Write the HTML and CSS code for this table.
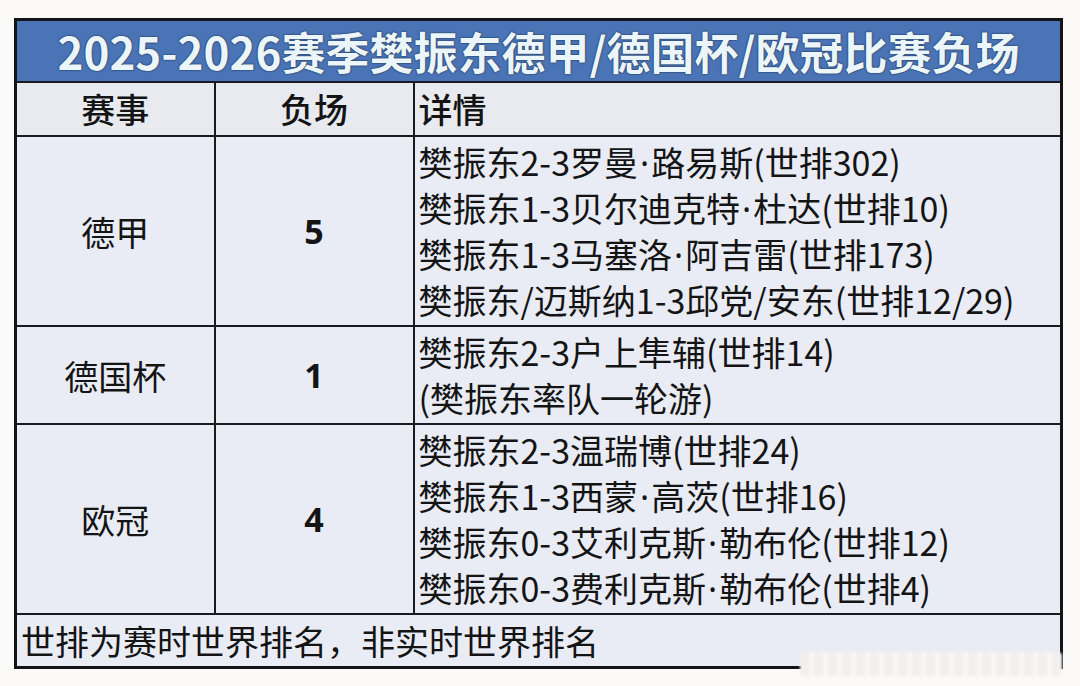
FILE: index.html
```html
<!DOCTYPE html>
<html lang="zh-CN">
<head>
<meta charset="utf-8">
<title>樊振东负场</title>
<link rel="stylesheet" href="styles.css">
</head>
<body>
<div class="page">
  <table class="sheet">
    <colgroup>
      <col class="c1"><col class="c2"><col class="c3">
    </colgroup>
    <tr class="title-row">
      <th colspan="3" class="title">2025-2026赛季樊振东德甲/德国杯/欧冠比赛负场</th>
    </tr>
    <tr class="head-row">
      <th class="center">赛事</th>
      <th class="center">负场</th>
      <th class="left">详情</th>
    </tr>
    <tr>
      <td class="center">德甲</td>
      <td class="center num">5</td>
      <td class="detail">
        <div>樊振东2-3罗曼<span class="dot">·</span>路易斯(世排302)</div>
        <div>樊振东1-3贝尔迪克特<span class="dot">·</span>杜达(世排10)</div>
        <div>樊振东1-3马塞洛<span class="dot">·</span>阿吉雷(世排173)</div>
        <div>樊振东/迈斯纳1-3邱党/安东(世排12/29)</div>
      </td>
    </tr>
    <tr>
      <td class="center">德国杯</td>
      <td class="center num">1</td>
      <td class="detail">
        <div>樊振东2-3户上隼辅(世排14)</div>
        <div>(樊振东率队一轮游)</div>
      </td>
    </tr>
    <tr>
      <td class="center">欧冠</td>
      <td class="center num">4</td>
      <td class="detail">
        <div>樊振东2-3温瑞博(世排24)</div>
        <div>樊振东1-3西蒙<span class="dot">·</span>高茨(世排16)</div>
        <div>樊振东0-3艾利克斯<span class="dot">·</span>勒布伦(世排12)</div>
        <div>樊振东0-3费利克斯<span class="dot">·</span>勒布伦(世排4)</div>
      </td>
    </tr>
    <tr class="foot-row">
      <td colspan="3" class="foot">世排为赛时世界排名，非实时世界排名</td>
    </tr>
  </table>
  <div class="watermark"></div>
</div>
</body>
</html>
```

FILE: styles.css
```css
html, body {
  margin: 0;
  padding: 0;
  background: #fcfaf8;
}

.page {
  position: relative;
  padding: 18px 0 0 14px;
  width: 1080px;
  height: 686px;
  box-sizing: border-box;
}

.sheet {
  border-collapse: collapse;
  width: 1049px;
  table-layout: fixed;
  border: 3px solid #121418;
  font-family: "Noto Sans CJK SC", "Noto Sans", sans-serif;
  color: #141414;
  font-size: 34px;
}

.c1 { width: 199px; }
.c2 { width: 199px; }
.c3 { width: auto; }

.sheet th,
.sheet td {
  border: 2px solid #1a1b1f;
  background: #e9ecf4;
  padding: 0;
}

.title {
  height: 60px;
  background: #4a74b6 !important;
  color: #eaf6fb;
  font-size: 44px;
  font-weight: 700;
  line-height: 60px;
  text-align: center;
  letter-spacing: 0;
  text-shadow: 0 0 1px #1d2c4a, 0 0 2px #1d2c4a;
}

.head-row th {
  height: 52px;
  font-weight: 500;
  line-height: 52px;
  background: #e8eaf0;
}

.center { text-align: center; }
.left { text-align: left; padding-left: 4px !important; }

.num {
  font-family: "Noto Sans", "Liberation Sans", sans-serif;
  font-weight: 700;
  font-size: 34px;
}

.detail {
  padding: 2px 4px !important;
  line-height: 46px;
  white-space: nowrap;
}

.dot {
  font-family: "Noto Sans", "Liberation Sans", sans-serif;
  line-height: 1;
  margin: 0 2px;
}

.foot {
  height: 51px;
  line-height: 51px;
  padding-left: 4px !important;
}

.watermark {
  position: absolute;
  left: 800px;
  top: 652px;
  width: 262px;
  height: 24px;
  background: repeating-linear-gradient(90deg, #f1f0ef 0 9px, #f8f7f6 9px 14px);
  filter: blur(1px);
  border-radius: 4px;
}
```
